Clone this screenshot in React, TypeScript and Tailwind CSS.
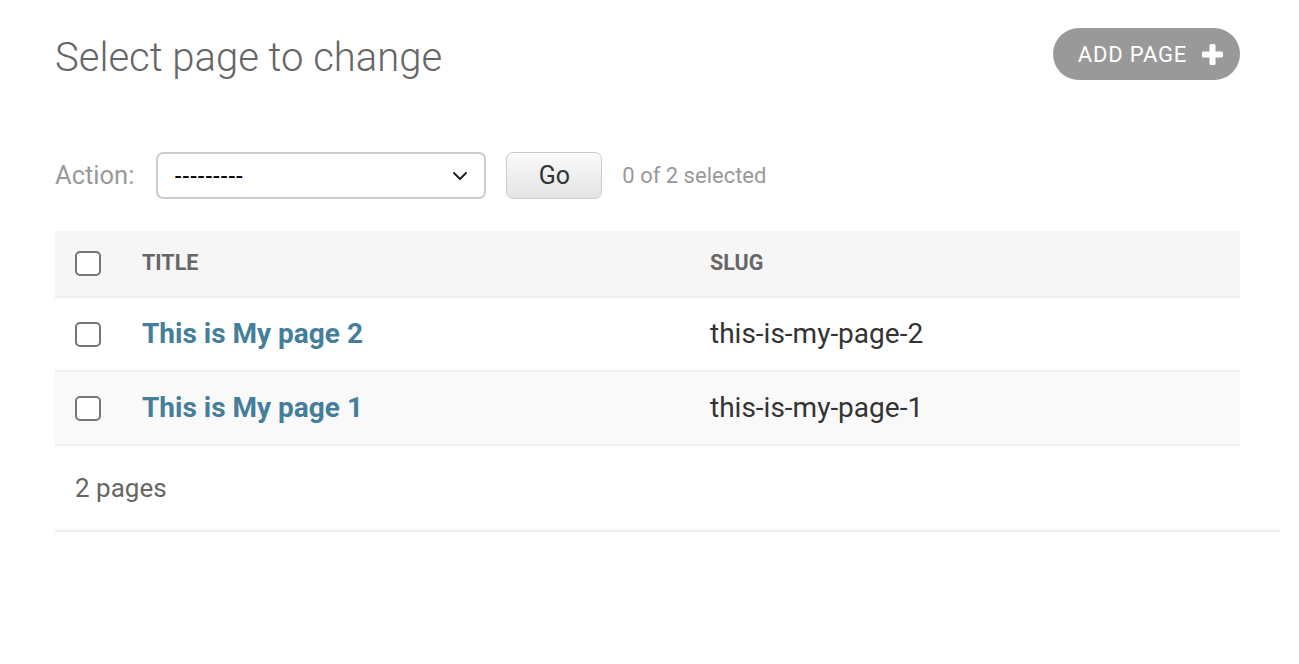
import { ChevronDown } from 'lucide-react';

type PageRow = {
  title: string;
  slug: string;
};

const rows: PageRow[] = [
  { title: 'This is My page 2', slug: 'this-is-my-page-2' },
  { title: 'This is My page 1', slug: 'this-is-my-page-1' },
];

function Checkbox() {
  return <span className="block h-[25px] w-[26px] rounded-[5px] border-2 border-[#767676] bg-white" />;
}

function PlusIcon() {
  return (
    <svg className="h-[21px] w-[21px]" viewBox="0 0 21 21" aria-hidden="true">
      <rect x="7.5" y="0" width="6" height="21" rx="1.5" fill="white" />
      <rect x="0" y="7.5" width="21" height="6" rx="1.5" fill="white" />
    </svg>
  );
}

export default function App() {
  return (
    <div className="min-h-screen bg-white font-['Roboto',sans-serif] text-[#333]">
      <div className="pl-[55px] pr-[19px]">
        <div className="flex items-start justify-between pr-[40px] pt-[28px]">
          <h1 className="mt-[6px] text-[40px] font-light leading-[48px] text-[#666]">Select page to change</h1>
          <a
            className="flex h-[52px] items-center gap-[15px] rounded-full bg-[#999] pl-[25px] pr-[17px] text-[22px] uppercase tracking-[0.8px] text-white"
            href="#"
          >
            ADD PAGE
            <PlusIcon />
          </a>
        </div>

        <div className="mt-[70px] flex h-[47px] items-center pr-[40px]">
          <span className="text-[25.5px] text-[#999]">Action:</span>
          <div className="ml-[22px] flex h-[47px] w-[330px] items-center justify-between rounded-[7px] border-2 border-[#ccc] bg-white pl-[16px] pr-[12px]">
            <span className="font-['Liberation_Sans',Arial,sans-serif] text-[23px] text-black">---------</span>
            <ChevronDown className="h-[24px] w-[24px] text-[#222]" strokeWidth={2} />
          </div>
          <button
            className="ml-[20px] h-[47px] w-[96px] rounded-[7px] border border-[#ccc] bg-gradient-to-b from-[#fafafa] to-[#e4e4e4] text-[25px] text-[#333]"
            type="button"
          >
            Go
          </button>
          <span className="ml-[20px] text-[22px] text-[#999]">0 of 2 selected</span>
        </div>

        <div className="mt-[32px] w-[1185px]">
          <div className="flex h-[67px] items-center border-b-2 border-[#eee] bg-[#f6f6f6]">
            <div className="w-[87px] pl-[20px]">
              <Checkbox />
            </div>
            <div className="w-[568px] text-[21.5px] font-bold uppercase text-[#666]">Title</div>
            <div className="text-[21.5px] font-bold uppercase text-[#666]">Slug</div>
          </div>
          {rows.map((row, index) => (
            <div
              className={[
                'flex h-[74px] items-center border-b-2 border-[#eee]',
                index % 2 === 1 ? 'bg-[#f9f9f9]' : 'bg-white',
              ].join(' ')}
              key={row.slug}
            >
              <div className="w-[87px] pl-[20px]">
                <Checkbox />
              </div>
              <a className="w-[568px] text-[28px] font-bold text-[#447e9b]" href="#">
                {row.title}
              </a>
              <div className="text-[28px] text-[#333]">{row.slug}</div>
            </div>
          ))}
        </div>

        <div className="flex h-[86px] items-center border-b-2 border-[#eee] pl-[20px] text-[26px] text-[#666]">
          2 pages
        </div>
      </div>
    </div>
  );
}
